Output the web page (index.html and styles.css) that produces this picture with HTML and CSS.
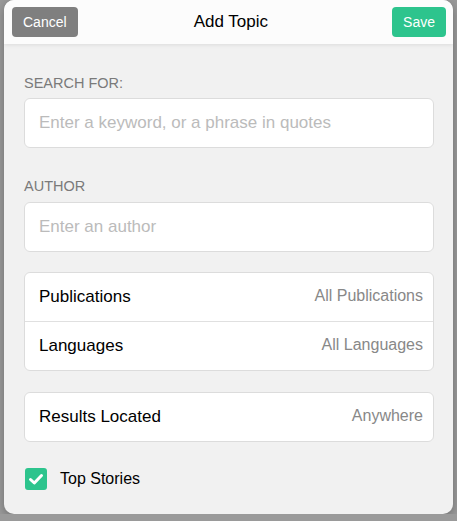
FILE: index.html
```html
<!DOCTYPE html>
<html lang="en">
<head>
<meta charset="utf-8">
<title>Add Topic</title>
<link rel="stylesheet" href="styles.css">
</head>
<body>
<div class="modal">
  <header class="modal-header">
    <button class="btn btn-cancel" type="button">Cancel</button>
    <h1 class="modal-title">Add Topic</h1>
    <button class="btn btn-save" type="button">Save</button>
  </header>
  <div class="modal-body">
    <label class="field-label" for="keyword">SEARCH FOR:</label>
    <input class="field-input" id="keyword" type="text" placeholder="Enter a keyword, or a phrase in quotes">

    <label class="field-label field-label-spaced" for="author">AUTHOR</label>
    <input class="field-input" id="author" type="text" placeholder="Enter an author">

    <ul class="list-group">
      <li class="list-row"><span class="row-name">Publications</span><span class="row-value">All Publications</span></li>
      <li class="list-row"><span class="row-name">Languages</span><span class="row-value">All Languages</span></li>
    </ul>

    <ul class="list-group list-group-spaced">
      <li class="list-row"><span class="row-name">Results Located</span><span class="row-value">Anywhere</span></li>
    </ul>

    <div class="check-row">
      <span class="check-box">
        <svg width="22" height="22" viewBox="0 0 22 22"><polyline points="5.5,11.5 9.3,15 16.5,7.5" fill="none" stroke="#fff" stroke-width="3" stroke-linecap="round" stroke-linejoin="round"/></svg>
      </span>
      <span class="check-label">Top Stories</span>
    </div>
  </div>
</div>
</body>
</html>
```

FILE: styles.css
```css
* {
  box-sizing: border-box;
}

body {
  margin: 0;
  background: #9a9a9a;
  font-family: "Liberation Sans", Arial, sans-serif;
  overflow: hidden;
}

.modal {
  margin: 0 4px 0 4px;
  width: 449px;
  height: 514px;
  background: #f1f1f1;
  border-radius: 10px;
  overflow: hidden;
  box-shadow: 0 3px 10px rgba(0, 0, 0, 0.28);
}

/* top bar */
.modal-header {
  height: 44px;
  display: grid;
  grid-template-columns: auto 1fr auto;
  align-items: center;
  padding: 0 7px 0 8px;
  background: #fcfcfc;
  box-shadow: 0 1px 4px rgba(0, 0, 0, 0.09);
  position: relative;
}

.modal-title {
  margin: 0;
  text-align: center;
  font-size: 17px;
  font-weight: normal;
  color: #000;
  padding-right: 8px;
}

.btn {
  height: 30px;
  border: 0;
  border-radius: 4px;
  padding: 0 11px;
  font-family: inherit;
  font-size: 14px;
  color: #fff;
}

.btn-cancel {
  background: #7f7f7f;
}

.btn-save {
  background: #2dc48d;
}

/* form body */
.modal-body {
  padding: 29px 19px 0 20px;
  display: flex;
  flex-direction: column;
}

.field-label {
  display: block;
  font-size: 14.5px;
  line-height: 20px;
  color: #7a7a7a;
  margin-bottom: 5px;
}

.field-label-spaced {
  margin-top: 28px;
  margin-bottom: 6px;
}

.field-input {
  display: block;
  width: 100%;
  height: 50px;
  margin: 0;
  padding: 0 14px;
  border: 1px solid #dcdcdc;
  border-radius: 6px;
  background: #fff;
  font-family: inherit;
  font-size: 17px;
  color: #222;
  outline: none;
}

.field-input::placeholder {
  color: #bbb;
}

.list-group {
  list-style: none;
  margin: 20px 0 0;
  padding: 0;
  background: #fff;
  border: 1px solid #dcdcdc;
  border-radius: 6px;
}

.list-group-spaced {
  margin-top: 21px;
}

.list-row {
  height: 48px;
  display: flex;
  align-items: center;
  justify-content: space-between;
  padding: 0 10px 0 14px;
}

.list-row + .list-row {
  border-top: 1px solid #e0e0e0;
  height: 49px;
}

.row-name {
  font-size: 17px;
  color: #000;
}

.row-value {
  font-size: 16px;
  color: #888;
  margin-top: -2px;
}

.check-row {
  display: flex;
  align-items: center;
  gap: 13px;
  margin-top: 26px;
  padding-left: 1px;
}

.check-box {
  width: 22px;
  height: 22px;
  border-radius: 3px;
  background: #2dc48d;
  display: flex;
}

.check-label {
  font-size: 16px;
  color: #000;
}
```
